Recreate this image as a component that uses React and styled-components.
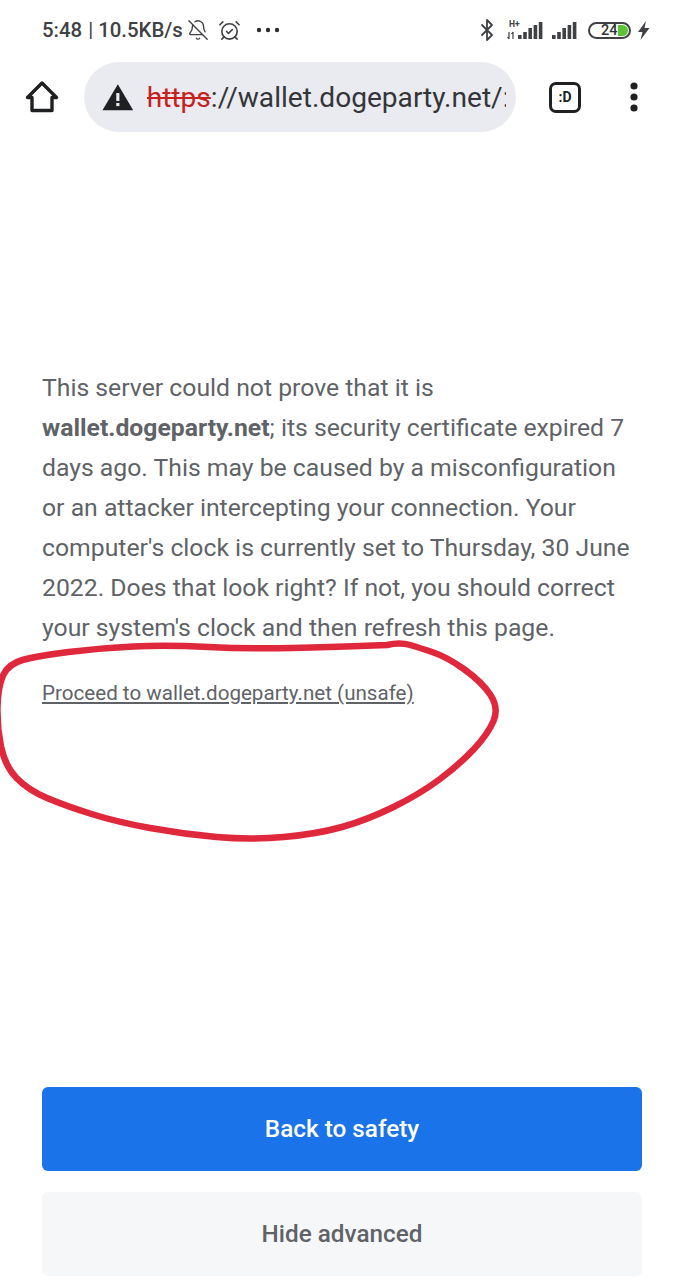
import React from 'react'
import styled, { createGlobalStyle } from 'styled-components'
import { AlarmClockCheck, BellOff, Bluetooth } from 'lucide-react'

const GlobalStyle = createGlobalStyle`
  html, body {
    margin: 0;
    padding: 0;
    background: #fff;
  }
  body {
    font-family: Roboto, "Liberation Sans", sans-serif;
  }
`

const Page = styled.div`
  position: relative;
  width: 683px;
  height: 1280px;
  overflow: hidden;
  background: #fff;
  display: flex;
  flex-direction: column;
`

const StatusBar = styled.div`
  height: 62px;
  padding: 0 33px 2px 42px;
  box-sizing: border-box;
  display: flex;
  align-items: center;
  justify-content: space-between;
  color: #3f4144;
`

const StatusGroup = styled.div`
  display: flex;
  align-items: center;
`

const Clock = styled.span`
  font-size: 20.4px;
  font-weight: 500;
  white-space: nowrap;
`

const Divider = styled.span`
  font-weight: 400;
  margin: 0 5px 0 6px;
`

const Dots = styled.svg`
  margin-left: 15px;
`

const BatteryBody = styled.div`
  position: relative;
  width: 43px;
  height: 17px;
  margin: 0 6px 0 10px;
  border: 2px solid #3f4144;
  border-radius: 10px;
  box-sizing: border-box;
  overflow: hidden;
`

const BatteryFill = styled.div`
  position: absolute;
  top: 1px;
  bottom: 1px;
  right: 1px;
  width: 10px;
  background: #5cc337;
  border-radius: 0 6px 6px 0;
`

const BatteryText = styled.span`
  position: absolute;
  left: 11px;
  top: 0;
  font-size: 14.5px;
  line-height: 13px;
  font-weight: 500;
  color: #333;
`

const Toolbar = styled.div`
  height: 70px;
  padding: 0 0 0 25px;
  display: flex;
  align-items: center;
`

const Omnibox = styled.div`
  width: 432px;
  height: 70px;
  margin-left: 25px;
  padding: 0 10px 0 18px;
  box-sizing: border-box;
  border-radius: 35px;
  background: #e9ebf0;
  display: flex;
  align-items: center;
  overflow: hidden;
`

const Url = styled.span`
  margin-left: 13px;
  font-size: 28.1px;
  color: #333538;
  white-space: nowrap;
  overflow: hidden;
`

const Scheme = styled.span`
  color: #c5221f;
  text-decoration: line-through;
`

const TabButton = styled.div`
  width: 32px;
  height: 31px;
  margin-left: 33px;
  box-sizing: border-box;
  border: 3px solid #1f2022;
  border-radius: 7px;
  display: flex;
  align-items: center;
  justify-content: center;
  font-size: 14px;
  font-weight: 700;
  color: #1f2022;
`

const MenuDots = styled.svg`
  margin-left: 47px;
`

const Content = styled.div`
  flex: 1;
  padding: 236px 42px 0;
  display: flex;
  flex-direction: column;
  color: #5f6368;
`

const Paragraph = styled.p`
  margin: 0;
  font-size: 24.75px;
  line-height: 40px;
  width: 600px;
`

const ProceedLink = styled.a`
  display: block;
  margin-top: 31px;
  font-size: 20.6px;
  line-height: 28px;
  color: #5f6368;
  text-decoration: underline;
`

const Actions = styled.div`
  margin-top: auto;
  margin-bottom: 4px;
  display: flex;
  flex-direction: column;
  gap: 21px;
`

const ActionButton = styled.button`
  width: 600px;
  height: 84px;
  padding: 0 0 2px;
  border: 0;
  border-radius: 6px;
  font-family: inherit;
  font-size: 24.3px;
  font-weight: 500;
  background: ${p => (p.$primary ? '#1a73e8' : '#f6f7f9')};
  color: ${p => (p.$primary ? '#fff' : '#5f6368')};
`

const Scribble = styled.svg`
  position: absolute;
  left: 0;
  top: 0;
  pointer-events: none;
`

const scribblePoints = [
  [387, 645], [400, 642], [420, 648], [447, 657], [482, 682], [499, 708], [488, 734],
  [460, 764], [420, 794], [367, 820], [317, 834], [250, 840], [183, 834], [117, 822],
  [66, 806], [28, 790], [5, 766], [-3, 727], [-2, 687], [8, 664], [37, 656], [100, 648],
  [167, 645], [250, 649], [333, 647], [387, 645],
]

function smoothPath(points) {
  let d = `M${points[0][0]} ${points[0][1]}`
  for (let i = 1; i < points.length - 1; i++) {
    const [x, y] = points[i]
    const [nx, ny] = points[i + 1]
    d += ` Q${x} ${y} ${(x + nx) / 2} ${(y + ny) / 2}`
  }
  const last = points[points.length - 1]
  return `${d} L${last[0]} ${last[1]}`
}

function SignalBars({ x = 0 }) {
  const heights = [4, 7, 11, 14, 17]
  return (
    <g transform={`translate(${x} 0)`}>
      {heights.map((h, i) => (
        <rect key={i} x={i * 5.2} y={17 - h} width="3.6" height={h} fill="#3f4144" />
      ))}
    </g>
  )
}

function NetworkIcons() {
  return (
    <svg width="72" height="22" viewBox="0 0 72 22">
      <text x="3" y="8" fontFamily="Roboto" fontSize="8.5" fontWeight="700" fill="#3f4144">H+</text>
      <path d="M3 13v7M1.5 18l1.5 2M7 13v7M5.5 15L7 13" stroke="#3f4144" strokeWidth="1.2" fill="none" />
      <g transform="translate(0 3)">
        <SignalBars x={12} />
        <SignalBars x={46} />
      </g>
    </svg>
  )
}

function HomeIcon() {
  return (
    <svg width="34" height="34" viewBox="0 0 34 34">
      <path
        d="M17 3 L31.5 17.5 H27 V30.5 H7 V17.5 H2.5 Z"
        fill="none"
        stroke="#1f2022"
        strokeWidth="3.4"
        strokeLinejoin="round"
      />
    </svg>
  )
}

function WarningIcon() {
  return (
    <svg width="32" height="28" viewBox="0 0 32 28">
      <path d="M16 1 L31.5 27.5 H0.5 Z" fill="#1f2022" />
      <rect x="14.4" y="10" width="3.2" height="8" fill="#e9ebf0" />
      <rect x="14.4" y="20" width="3.2" height="3.2" fill="#e9ebf0" />
    </svg>
  )
}

export default function App() {
  return (
    <Page>
      <GlobalStyle />
      <StatusBar>
        <StatusGroup>
          <Clock>
            5:48<Divider>|</Divider>10.5KB/s
          </Clock>
          <BellOff size={22} strokeWidth={1.5} style={{ marginLeft: 4 }} />
          <AlarmClockCheck size={23} strokeWidth={1.7} style={{ marginLeft: 9 }} />
          <Dots width="24" height="6" viewBox="0 0 24 6">
            <circle cx="3" cy="3" r="2.2" fill="#2c2d30" />
            <circle cx="12" cy="3" r="2.2" fill="#2c2d30" />
            <circle cx="21" cy="3" r="2.2" fill="#2c2d30" />
          </Dots>
        </StatusGroup>
        <StatusGroup>
          <Bluetooth size={24} strokeWidth={1.8} style={{ marginRight: 7 }} />
          <NetworkIcons />
          <BatteryBody>
            <BatteryFill />
            <BatteryText>24</BatteryText>
          </BatteryBody>
          <svg width="13" height="19" viewBox="0 0 13 19">
            <path d="M9 0 L1 11 H5.5 L3.5 19 L12.5 7 H7.5 Z" fill="#3f4144" />
          </svg>
        </StatusGroup>
      </StatusBar>
      <Toolbar>
        <HomeIcon />
        <Omnibox>
          <WarningIcon />
          <Url>
            <Scheme>https</Scheme>://wallet.dogeparty.net/:
          </Url>
        </Omnibox>
        <TabButton>:D</TabButton>
        <MenuDots width="12" height="30" viewBox="0 0 12 30">
          <circle cx="6" cy="4" r="3.6" fill="#1f2022" />
          <circle cx="6" cy="15" r="3.6" fill="#1f2022" />
          <circle cx="6" cy="26" r="3.6" fill="#1f2022" />
        </MenuDots>
      </Toolbar>
      <Content>
        <Paragraph>
          This server could not prove that it is
          <br />
          <strong>wallet.dogeparty.net</strong>; its security certificate expired 7 days ago. This may be
          caused by a misconfiguration or an attacker intercepting your connection. Your computer's clock
          is currently set to Thursday, 30 June 2022. Does that look right? If not, you should correct
          your system's clock and then refresh this page.
        </Paragraph>
        <ProceedLink href="#">Proceed to wallet.dogeparty.net (unsafe)</ProceedLink>
        <Actions>
          <ActionButton $primary>Back to safety</ActionButton>
          <ActionButton>Hide advanced</ActionButton>
        </Actions>
      </Content>
      <Scribble width="683" height="1280" viewBox="0 0 683 1280">
        <path
          d={smoothPath(scribblePoints)}
          fill="none"
          stroke="#e0283c"
          strokeWidth="6.5"
          strokeLinecap="round"
          strokeLinejoin="round"
        />
      </Scribble>
    </Page>
  )
}
